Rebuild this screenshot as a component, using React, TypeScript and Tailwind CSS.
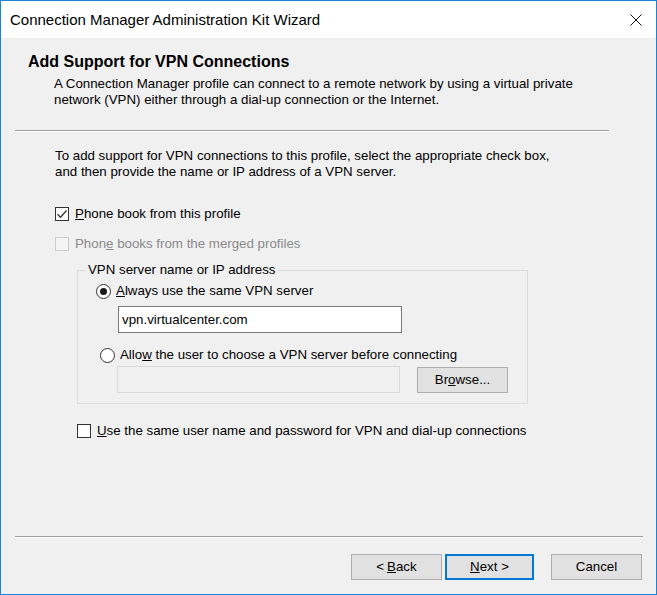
import React from 'react';

const Check = ({ checked, disabled }: { checked?: boolean; disabled?: boolean }) => (
  <div
    className={`w-[14px] h-[14px] border flex items-center justify-center shrink-0 ${
      disabled ? 'border-[#cccccc] bg-[#f4f4f4]' : 'border-[#333333] bg-white'
    }`}
  >
    {checked && (
      <svg width="12" height="12" viewBox="0 0 12 12">
        <path d="M1.5 6.2 L4.5 9.2 L10.5 2.5" fill="none" stroke="#333" strokeWidth="1.3" />
      </svg>
    )}
  </div>
);

const Radio = ({ checked }: { checked?: boolean }) => (
  <div className="w-[15px] h-[15px] rounded-full border border-[#333333] bg-white flex items-center justify-center shrink-0">
    {checked && <div className="w-[7px] h-[7px] rounded-full bg-[#1a1a1a]" />}
  </div>
);

const Btn = ({ children, primary, className }: { children: React.ReactNode; primary?: boolean; className?: string }) => (
  <div
    className={`h-[26px] flex items-center justify-center bg-[#e1e1e1] ${
      primary ? 'border-2 border-[#0078d7]' : 'border border-[#adadad]'
    } ${className ?? ''}`}
  >
    {children}
  </div>
);

export default function App() {
  return (
    <div className="w-[657px] h-[595px] border border-[#1883d7] bg-[#f0f0f0] flex flex-col font-['Liberation_Sans',Arial,sans-serif] text-[13.3px] leading-[16px] text-black">
      {/* title bar */}
      <div className="h-[37px] bg-white flex items-center justify-between pl-[9px] pr-[14px] shrink-0">
        <span className="text-[15px]">Connection Manager Administration Kit Wizard</span>
        <svg width="12" height="12" viewBox="0 0 12 12">
          <path d="M0.5 0.5 L11.5 11.5 M11.5 0.5 L0.5 11.5" stroke="#111" strokeWidth="1" />
        </svg>
      </div>

      {/* header */}
      <div className="pl-[27px] pt-[14px]">
        <h1 className="text-[16px] font-bold leading-[20px]">Add Support for VPN Connections</h1>
        <p className="mt-[4px] pl-[26px]">
          A Connection Manager profile can connect to a remote network by using a virtual private
          <br />
          network (VPN) either through a dial-up connection or the Internet.
        </p>
      </div>
      <div className="mt-[22px] ml-[14px] w-[594px] border-t border-[#a0a0a0] border-b border-b-white" />

      {/* body */}
      <div className="pl-[54px]">
        <p className="mt-[16px]">
          To add support for VPN connections to this profile, select the appropriate check box,
          <br />
          and then provide the name or IP address of a VPN server.
        </p>

        <div className="mt-[26px] flex items-center gap-[6px]">
          <Check checked />
          <span>
            <u>P</u>hone book from this profile
          </span>
        </div>
        <div className="mt-[14px] flex items-center gap-[6px] text-[#8a8a8a]">
          <Check disabled />
          <span>
            Phon<u>e</u> books from the merged profiles
          </span>
        </div>

        <fieldset className="mt-[10px] ml-[22px] w-[451px] h-[142px] border border-[#dcdcdc]">
          <legend className="ml-[7px] px-[3px]">VPN server name or IP address</legend>
          <div className="mt-[5px] pl-[18px] flex items-center gap-[5px]">
            <Radio checked />
            <span>
              <u>A</u>lways use the same VPN server
            </span>
          </div>
          <div className="mt-[7px] ml-[40px] w-[284px] h-[27px] border border-[#7a7a7a] bg-white flex items-center pl-[3px]">
            vpn.virtualcenter.com
          </div>
          <div className="mt-[14px] pl-[22px] flex items-center gap-[5px]">
            <Radio />
            <span>
              Allo<u>w</u> the user to choose a VPN server before connecting
            </span>
          </div>
          <div className="mt-[3px] ml-[39px] flex items-center gap-[17px]">
            <div className="w-[283px] h-[27px] border border-[#d9d9d9] bg-[#f0f0f0]" />
            <Btn className="w-[91px] h-[25px]">
              Br<u>o</u>wse...
            </Btn>
          </div>
        </fieldset>

        <div className="mt-[19px] ml-[22px] flex items-center gap-[6px]">
          <Check />
          <span>
            <u>U</u>se the same user name and password for VPN and dial-up connections
          </span>
        </div>
      </div>

      {/* footer */}
      <div className="mt-auto">
        <div className="ml-[14px] w-[628px] border-t border-[#a0a0a0] border-b border-b-white" />
        <div className="mt-[16px] mb-[14px] pr-[14px] flex justify-end">
          <Btn className="w-[91px]">
            &lt; <u className="ml-[3px]">B</u>ack
          </Btn>
          <Btn primary className="ml-[3px] w-[89px]">
            <u>N</u>ext &gt;
          </Btn>
          <Btn className="ml-[17px] w-[91px]">Cancel</Btn>
        </div>
      </div>
    </div>
  );
}
